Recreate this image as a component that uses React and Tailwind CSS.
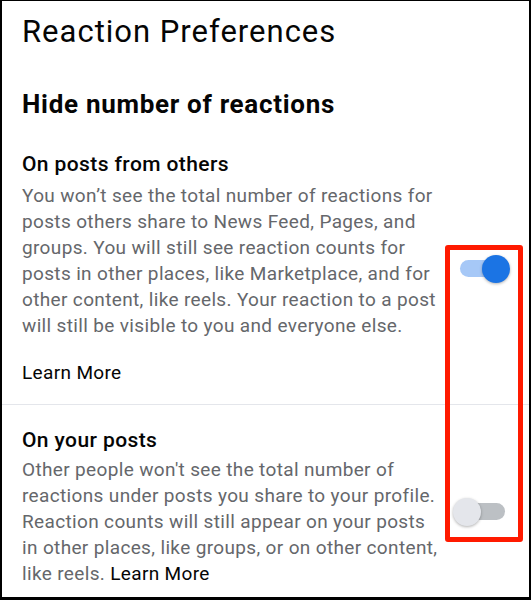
import React from 'react';

const Toggle = ({ on }) => {
  return (
    <div className="relative w-[57px] h-[28px] shrink-0">
      <div
        className={`absolute left-[7px] right-[5px] top-[5px] h-[17px] rounded-full ${
          on ? 'bg-[#a6c8f7]' : 'bg-[#bcc0c4]'
        }`}
      />
      <div
        className={`absolute top-0 w-[28px] h-[28px] rounded-full shadow-[0_1px_3px_rgba(0,0,0,0.3)] ${
          on ? 'right-0 bg-[#1b74e4]' : 'left-0 bg-[#e4e6eb]'
        }`}
      />
    </div>
  );
};

export default function App() {
  return (
    <div
      className="relative w-[531px] h-[600px] overflow-hidden bg-white border-black border-t border-l-2 border-r-2 border-b-[3px] text-[#050505]"
      style={{ fontFamily: 'Roboto, "Noto Sans", sans-serif' }}
    >
      <div className="pl-[20px] pt-[13px]">
        <h1 className="text-[31px] leading-[36px] font-normal tracking-[1px]">Reaction Preferences</h1>
        <h2 className="mt-[39px] text-[26px] leading-[30px] font-bold tracking-[0.7px]">
          Hide number of reactions
        </h2>
      </div>

      <div className="mt-[33px] border-b-[1.5px] border-[#e4e6eb]">
        <div className="flex items-center justify-between pl-[20px] pr-[19px] pb-[18px]">
          <div className="w-[418px]">
            <h3 className="text-[21px] leading-[24px] font-medium tracking-[0.4px]">On posts from others</h3>
            <p className="mt-[7px] text-[19px] leading-[26px] tracking-[0.35px] text-[#65676b]">
              You won’t see the total number of reactions for posts others share to News Feed, Pages, and
              groups. You will still see reaction counts for posts in other places, like Marketplace, and for
              other content, like reels. Your reaction to a post will still be visible to you and everyone
              else.
            </p>
            <p className="mt-[21px] text-[19px] leading-[26px] tracking-[0.35px]">Learn More</p>
          </div>
          <Toggle on />
        </div>
      </div>

      <div className="flex items-center justify-between pl-[20px] pr-[19px] pt-[23px]">
        <div className="w-[418px] pb-[9px]">
          <h3 className="text-[21px] leading-[24px] font-medium tracking-[0.4px]">On your posts</h3>
          <p className="mt-[5px] text-[19px] leading-[26px] tracking-[0.35px] text-[#65676b]">
            Other people won't see the total number of reactions under posts you share to your profile.
            Reaction counts will still appear on your posts in other places, like groups, or on other
            content, like reels. <span className="text-[#050505]">Learn More</span>
          </p>
        </div>
        <Toggle on={false} />
      </div>

      <div className="absolute left-[443px] top-[244px] w-[78px] h-[297px] border-[5px] border-[#ff1a00] rounded-[3px]" />
    </div>
  );
}
